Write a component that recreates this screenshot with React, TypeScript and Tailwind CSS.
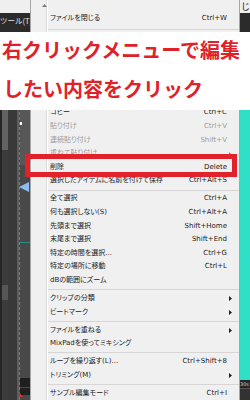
import React from "react";

type Row =
  | { t: string; k?: string; d?: boolean; sub?: boolean }
  | "sep"
  | "bigsep";

const rows: Row[] = [
  { t: "ファイルを閉じる", k: "Ctrl+W" },
  "bigsep",
  { t: "元に戻す", k: "Ctrl+Z" },
  { t: "やり直し", k: "Ctrl+Y" },
  "sep",
  { t: "切り取り", k: "Ctrl+X" },
  { t: "録音", k: "" },
  { t: "再生", k: "" },
  { t: "コピー", k: "Ctrl+C" },
  { t: "貼り付け", k: "Ctrl+V", d: true },
  { t: "連続貼り付け", k: "Shift+V", d: true },
  { t: "重ねて貼り付け", d: true, sub: true },
  { t: "削除", k: "Delete" },
  { t: "選択したアイテムに名前を付けて保存", k: "Ctrl+Alt+S" },
  "sep",
  { t: "全て選択", k: "Ctrl+A" },
  { t: "何も選択しない(S)", k: "Ctrl+Alt+A" },
  { t: "先頭まで選択", k: "Shift+Home" },
  { t: "末尾まで選択", k: "Shift+End" },
  { t: "特定の時間を選択...", k: "Ctrl+G" },
  { t: "特定の場所に移動", k: "Ctrl+L" },
  { t: "dBの範囲にズーム" },
  "sep",
  { t: "クリップの分類", sub: true },
  { t: "ビートマーク", sub: true },
  "sep",
  { t: "ファイルを重ねる", sub: true },
  { t: "MixPadを使ってミキシング" },
  "sep",
  { t: "ループを繰り返す(L)...", k: "Ctrl+Shift+8" },
  { t: "トリミング(M)", sub: true },
  "sep",
  { t: "サンプル編集モード", k: "Ctrl+I" },
  { t: "プロパティ", k: "" },
];

function Arrow({ gray }: { gray?: boolean }) {
  return (
    <svg width="3" height="5" viewBox="0 0 3 5">
      <path d="M0 0L3 2.5L0 5Z" fill={gray ? "#8a8a8a" : "#222222"} />
    </svg>
  );
}

export default function App() {
  const menuFont = {
    fontFamily: '"DejaVu Sans", "Noto Sans CJK JP", sans-serif',
  };
  return (
    <div className="relative flex h-[400px] w-[250px] overflow-hidden bg-[#3a3a3a]">
      {/* left column */}
      <div className="flex w-[30px] flex-col">
        <div className="h-[13px] shrink-0 bg-[#efefef]" />
        <div className="h-[19px] shrink-0 overflow-hidden whitespace-nowrap bg-[#2b2b2b] text-[7.5px] leading-[16px] text-[#e6e6e6] [font-family:'Noto_Sans_CJK_JP',sans-serif]">
          ツール(T)
        </div>
        <div className="relative flex flex-1">
          <div className="w-[2px] bg-[#262626]" />
          <div className="flex w-[6px] flex-col bg-[#3b3b3b]">
            <div className="h-[78px] shrink-0" />
            <div className="h-[40px] shrink-0 bg-[#626262]" />
            <div className="h-[135px] shrink-0" />
            <div className="h-[15px] shrink-0 bg-[#565656]" />
          </div>
          <div className="w-[9px] bg-[#393939]" />
          <div className="w-[2px] bg-[#5e5e5e]" />
          <div className="flex w-[11px] flex-col border-l border-dashed border-[#c45a5a] bg-[#494949]">
            <div className="h-[78px] shrink-0" />
            <div className="h-[55px] shrink-0 bg-[#575757] pt-[12px]">
              <div className="h-[3px] w-[2px] bg-white" />
            </div>
            <div className="h-[77px] shrink-0" />
            <div className="h-[1px] shrink-0 bg-[#2a8c84]" />
            <div className="h-[135px] shrink-0" />
            <div className="flex h-[17px] shrink-0 flex-col bg-[#1f1f1f]">
              <div className="h-[9px]" />
              <div className="h-[1px] bg-[#4a4a4a]" />
            </div>
          </div>
          {/* blue playhead marker */}
          <svg
            className="absolute left-[19px] top-[150px]"
            width="10"
            height="10"
            viewBox="0 0 10 10"
          >
            <path d="M0 5L10 0L10 10Z" fill="#8cbcf0" />
          </svg>
          <svg
            className="absolute left-[19px] top-[360px]"
            width="4"
            height="5"
            viewBox="0 0 4 5"
          >
            <path d="M0 0L4 5L0 5Z" fill="#d83030" />
          </svg>
        </div>
      </div>

      {/* context menu */}
      <div
        className="relative flex w-[210px] border-x border-[#a6a6a6] bg-[#f0f0f0] [font-feature-settings:'palt']"
        style={menuFont}
      >
        <svg
          className="absolute left-[11px] top-[4px]"
          width="5"
          height="3"
          viewBox="0 0 5 3"
        >
          <path d="M0 3L2.5 0L5 3Z" fill="#7a7a7a" />
        </svg>
        <div className="w-[16px] border-r border-[#dddddd]" />
        <div className="flex flex-1 flex-col border-l border-white pt-[11.5px]">
          {rows.map((r, i) => {
            if (r === "sep" || r === "bigsep") {
              return (
                <div
                  key={i}
                  className={`flex shrink-0 flex-col justify-center ${
                    r === "bigsep" ? "h-[9px]" : "h-[4.4px]"
                  }`}
                >
                  <div className="h-[1px] shrink-0 bg-[#d6d6d6]" />
                </div>
              );
            }
            return (
              <div
                key={i}
                className={`flex h-[13.6px] shrink-0 items-center whitespace-nowrap pl-[2px] text-[7px] leading-[13.6px] ${
                  r.d ? "text-[#9c9c9c]" : "text-[#222222]"
                }`}
              >
                <span className="flex-1">{r.t}</span>
                {r.k ? <span>{r.k}</span> : null}
                <span className="flex w-[12px] items-center pl-[2px]">
                  {r.sub ? <Arrow gray={r.d} /> : null}
                </span>
              </div>
            );
          })}
        </div>
      </div>

      {/* right column */}
      <div className="flex w-[10px] flex-col">
        <div className="h-[13px] shrink-0 overflow-hidden whitespace-nowrap bg-[#efefef] pl-[1px] text-[9px] leading-[13px] text-[#111111] [font-family:'Noto_Sans_CJK_JP',sans-serif]">
          じ
        </div>
        <div className="h-[19px] shrink-0 bg-[#2b2b2b]" />
        <div className="h-[348px] shrink-0 bg-[#2fe0c6]" />
        <div className="h-[8px] shrink-0 overflow-hidden whitespace-nowrap bg-[#262626] text-[5px] leading-[8px] text-[#cfcfcf] [font-family:'DejaVu_Sans',sans-serif]">
          30s
        </div>
        <div className="flex flex-1 flex-col bg-[#323232]">
          <div className="h-[1px] bg-[#555555]" />
        </div>
      </div>

      {/* instruction banner */}
      <div className="absolute left-0 top-[32px] h-[78px] w-[250px] overflow-hidden bg-white">
        <div className="-mt-[2.5px] whitespace-nowrap pl-[2px] text-[20px] font-bold leading-[39.5px] text-[#df2229] [font-family:'Noto_Sans_CJK_JP',sans-serif]">
          <div>右クリックメニューで編集</div>
          <div className="pl-[1px]">したい内容をクリック</div>
        </div>
      </div>

      {/* red highlight box */}
      <div className="absolute left-[25px] top-[154px] h-[23px] w-[212px] border-[5px] border-[#e2222b]" />
    </div>
  );
}
